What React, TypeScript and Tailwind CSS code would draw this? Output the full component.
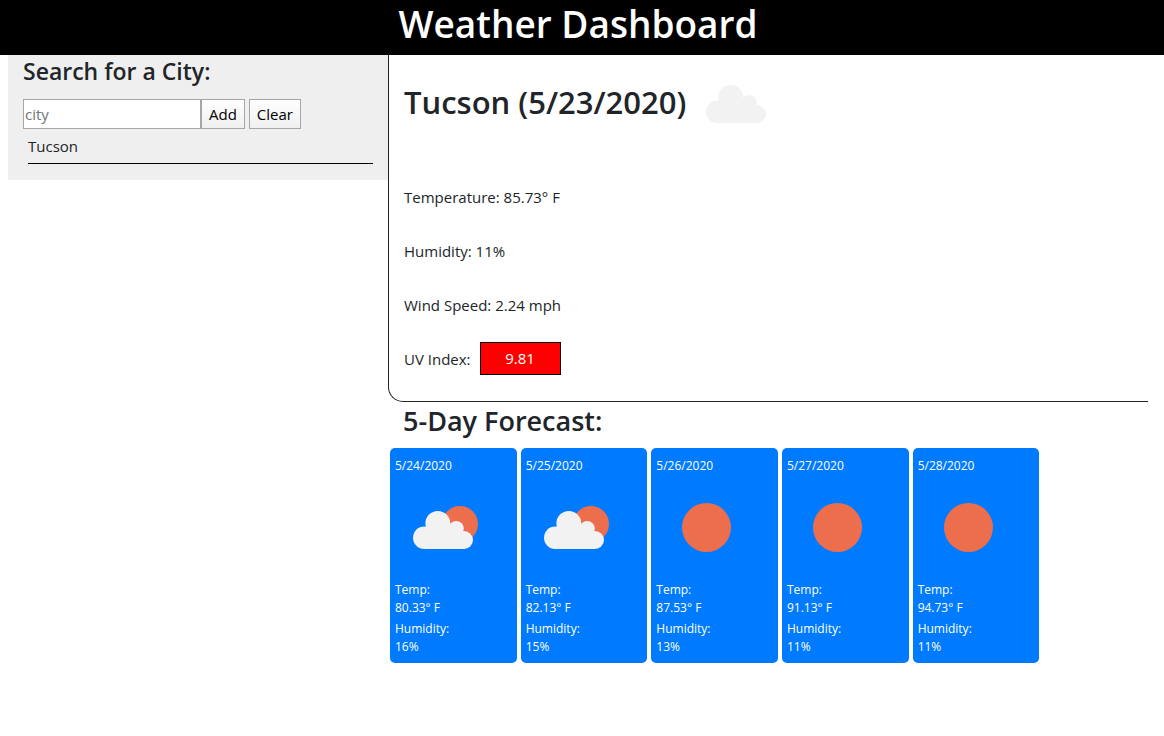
import { useState } from "react";
import type { FormEvent } from "react";

type Sky = "clear" | "partly";

interface Day {
  date: string;
  sky: Sky;
  temp: string;
  humidity: string;
}

const days: Day[] = [
  { date: "5/24/2020", sky: "partly", temp: "80.33° F", humidity: "16%" },
  { date: "5/25/2020", sky: "partly", temp: "82.13° F", humidity: "15%" },
  { date: "5/26/2020", sky: "clear", temp: "87.53° F", humidity: "13%" },
  { date: "5/27/2020", sky: "clear", temp: "91.13° F", humidity: "11%" },
  { date: "5/28/2020", sky: "clear", temp: "94.73° F", humidity: "11%" },
];

function CloudShape() {
  return (
    <g fill="#f2f2f2">
      <circle cx="29.3" cy="60.7" r="11.3" />
      <circle cx="42.8" cy="46.3" r="12.4" />
      <circle cx="61.2" cy="51.6" r="7.6" />
      <circle cx="69" cy="63" r="9" />
      <path d="M29.3 72V50H62L69 56V72Z" />
    </g>
  );
}

function SkyIcon({ sky }: { sky: Sky }) {
  return (
    <svg viewBox="0 0 100 100" className="size-[100px]" aria-hidden="true">
      {sky === "clear" ? (
        <circle cx="50.5" cy="50.5" r="24.5" fill="#ec6e4c" />
      ) : (
        <>
          <circle cx="65" cy="47" r="18" fill="#ec6e4c" />
          <CloudShape />
        </>
      )}
    </svg>
  );
}

function DayCard({ day }: { day: Day }) {
  return (
    <li className="mx-0.5 w-1/6 rounded-[5px] bg-[#007bff] px-[5px] pt-[9px] pb-[7px] text-[12px] leading-[18px] text-white">
      <h3 className="mb-0.5">{day.date}</h3>
      <SkyIcon sky={day.sky} />
      <p className="mt-1 mb-[3px]">
        Temp:
        <br />
        {day.temp}
      </p>
      <p>
        Humidity:
        <br />
        {day.humidity}
      </p>
    </li>
  );
}

const buttonClass =
  "h-[30px] border border-[#a6a6a6] bg-linear-to-b from-white to-[#f0f0f0] px-[7px] text-[15px] text-black";

export default function App() {
  const [cities, setCities] = useState<string[]>(["Tucson"]);
  const [city, setCity] = useState("");

  const addCity = (event: FormEvent) => {
    event.preventDefault();
    if (city.trim()) {
      setCities([...cities, city.trim()]);
      setCity("");
    }
  };

  return (
    <div className="font-['Open_Sans',sans-serif] text-[15px] leading-6 text-[#212529]">
      <header className="bg-black pr-2 pb-[7px] text-center text-white">
        <h1 className="text-[37px] leading-[48px] font-semibold">Weather Dashboard</h1>
      </header>
      <div className="flex items-start pr-4 pl-2">
        <aside className="w-1/3 bg-[#efefef] px-[15px] pb-4">
          <h2 className="mb-3 text-[23px] leading-8 font-semibold">Search for a City:</h2>
          <form className="flex" onSubmit={addCity}>
            <input
              type="text"
              aria-label="City"
              placeholder="city"
              value={city}
              onChange={(event) => setCity(event.target.value)}
              className="h-[30px] w-[178px] border border-[#a6a6a6] bg-white px-px text-black placeholder:text-[#757575]"
            />
            <button type="submit" className={buttonClass}>
              Add
            </button>
            <button type="button" className={`ml-1 ${buttonClass}`} onClick={() => setCities([])}>
              Clear
            </button>
          </form>
          <ul className="pt-[5px] pl-[5px]">
            {cities.map((name) => (
              <li key={name} className="border-b border-black pb-[5px]">
                {name}
              </li>
            ))}
          </ul>
        </aside>
        <main className="w-2/3">
          <section className="rounded-bl-[15px] border-b border-l border-[#212529] px-[15px] pt-[23px] pb-[26px]">
            <div className="mb-[59px] flex items-center gap-5">
              <h2 className="text-[31px] leading-[48px] font-semibold">Tucson (5/23/2020)</h2>
              <svg viewBox="18 30 60 42" className="h-[42px] w-[60px]" aria-hidden="true">
                <CloudShape />
              </svg>
            </div>
            <p className="mb-[30px]">Temperature: 85.73° F</p>
            <p className="mb-[30px]">Humidity: 11%</p>
            <p className="mb-[25px]">Wind Speed: 2.24 mph</p>
            <p className="flex items-center gap-[9px]">
              UV Index:
              <span className="w-[81px] border border-black bg-[#ff0000] py-1 text-center leading-[23px] text-white">
                9.81
              </span>
            </p>
          </section>
          <section>
            <h2 className="mb-2 px-[15px] text-[27px] leading-[38px] font-semibold">5-Day Forecast:</h2>
            <ul className="flex">
              {days.map((day) => (
                <DayCard key={day.date} day={day} />
              ))}
            </ul>
          </section>
        </main>
      </div>
    </div>
  );
}
